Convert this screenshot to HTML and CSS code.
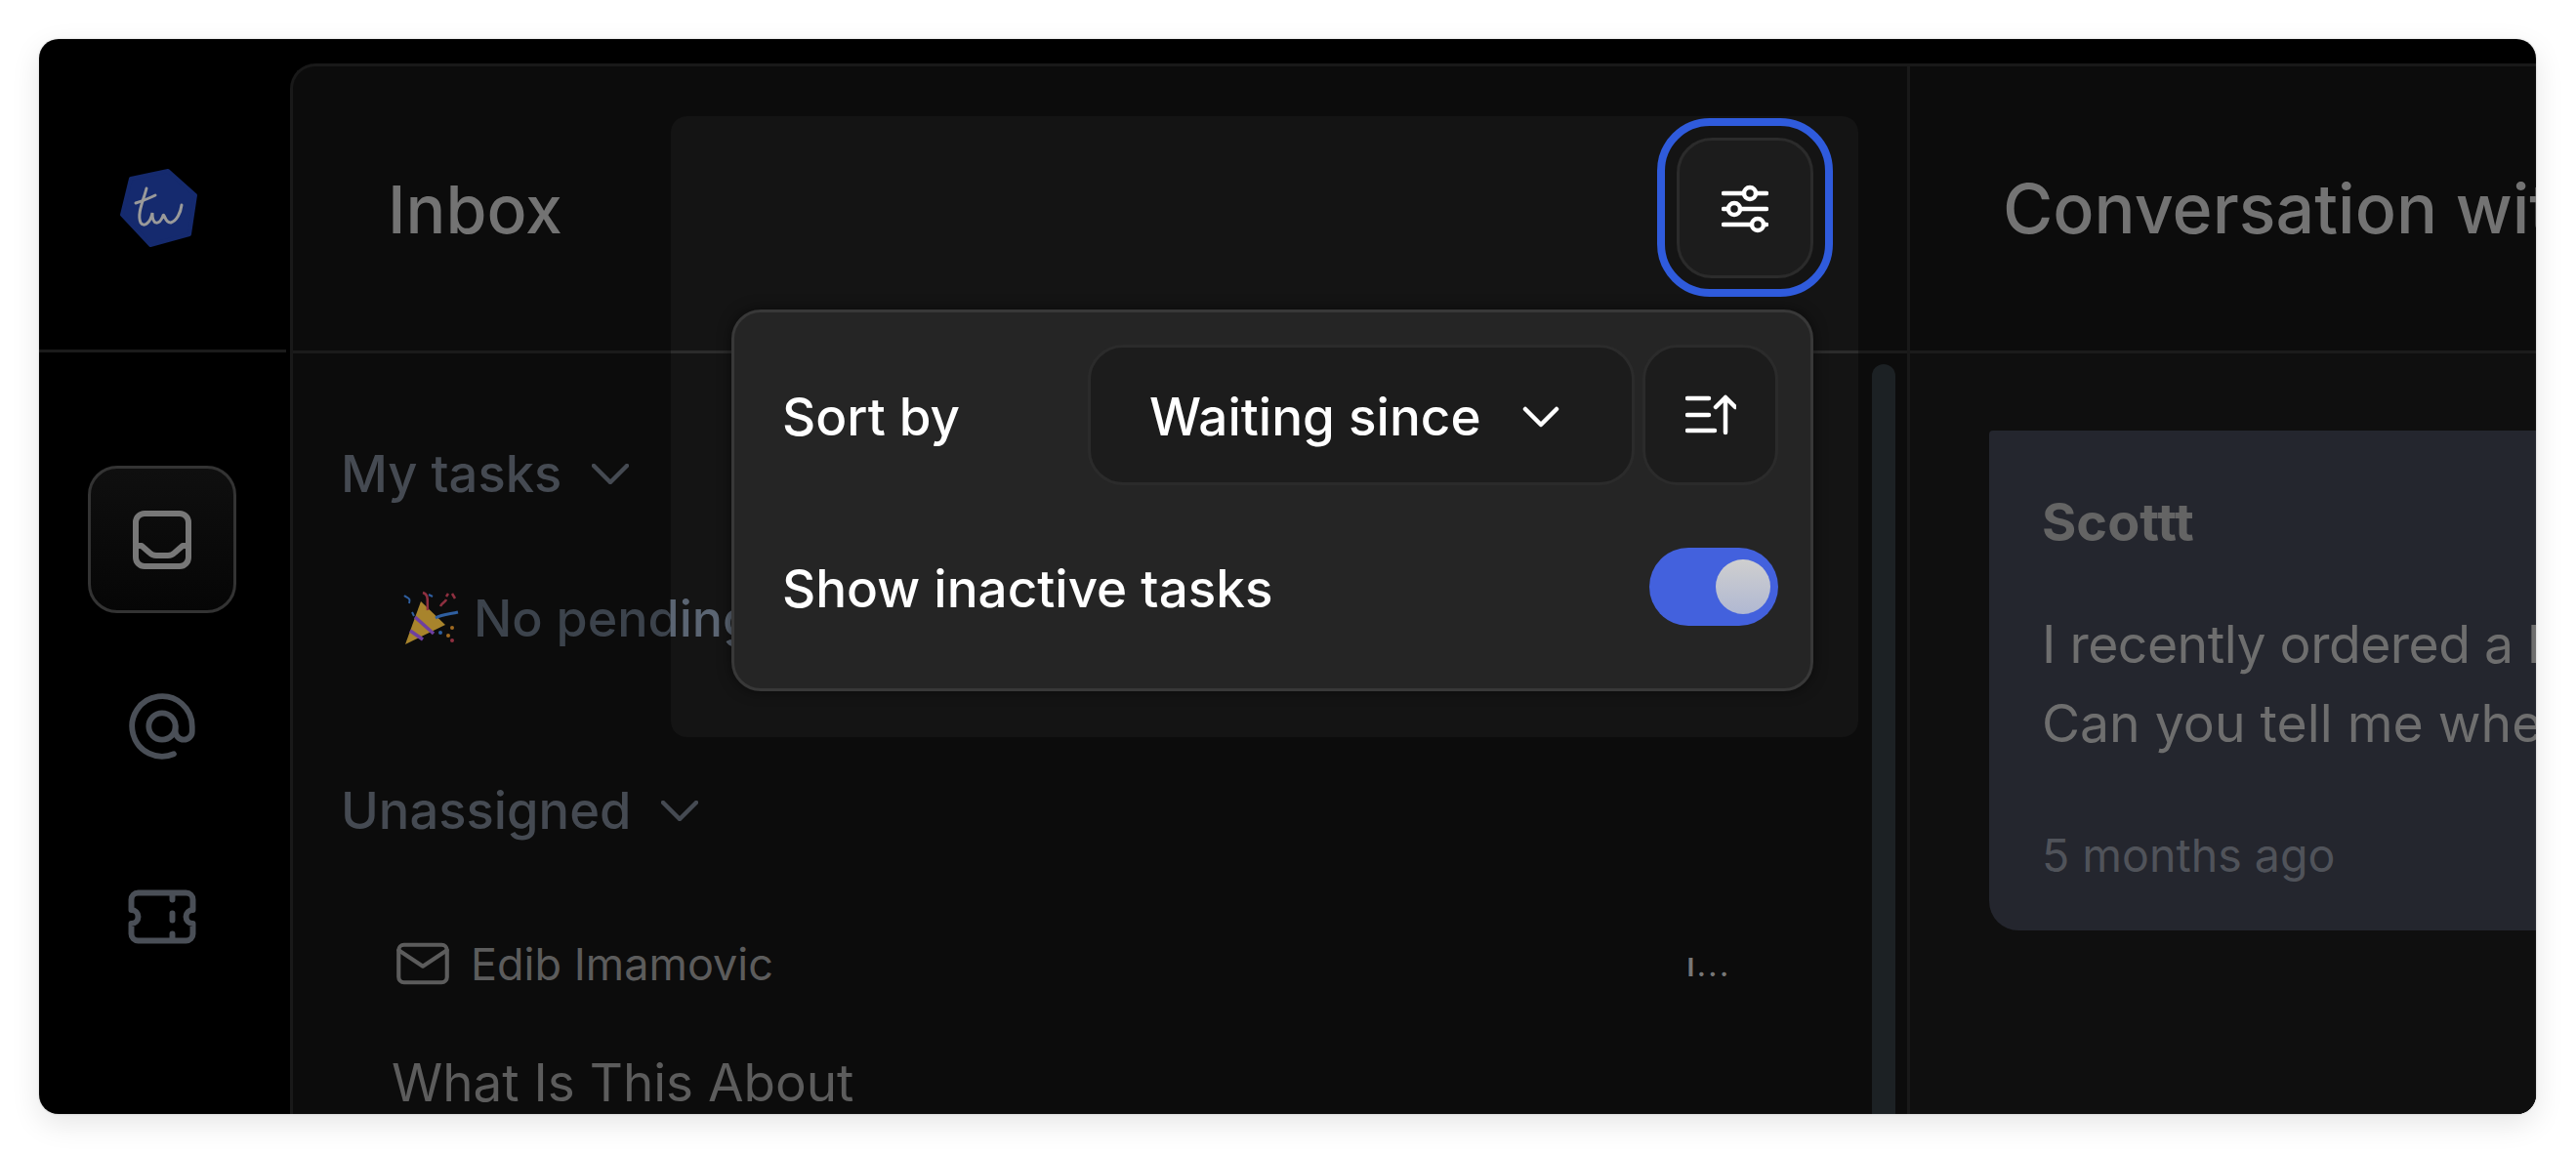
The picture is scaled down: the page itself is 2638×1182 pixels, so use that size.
FILE: index.html
```html
<!DOCTYPE html>
<html lang="en">
<head>
  <meta charset="UTF-8" />
  <meta name="viewport" content="width=device-width, initial-scale=1.0" />
  <title>Inbox</title>
  <link rel="stylesheet" href="styles.css">
</head>
<body>
  <div class="frame">
    <aside class="sidebar">
      <div class="brand">
        <svg class="logo" viewBox="0 0 80 80" fill="none">
          <path d="M49 2 L77 27 L71 67 L31 78 L2 47 L11 10 Z" fill="#152a6e" stroke="#152a6e" stroke-width="4" stroke-linejoin="round"/>
          <path d="M27 20 C24 32 17 46 21 55 C24 60 31 56 33 45 C33 58 40 58 44 48 C45 44 46 56 52 55 C58 53 62 45 63 37" stroke="#9a9a9a" stroke-width="3" stroke-linecap="round"/>
          <path d="M16 35 C22 33 30 30 36 27" stroke="#9a9a9a" stroke-width="3" stroke-linecap="round"/>
        </svg>
      </div>
      <nav class="side-nav">
        <a class="nav-item active">
          <svg width="60" height="60" viewBox="0 0 60 60" fill="none" stroke="#777" stroke-width="6" stroke-linejoin="round" stroke-linecap="round">
            <rect x="3" y="3" width="54" height="54" rx="9"/>
            <path d="M3 36 H9 L17 43 C19 45 21 46 24 46 H36 C39 46 41 45 43 43 L51 36 H57"/>
          </svg>
        </a>
        <a class="nav-item">
          <svg width="82" height="82" viewBox="0 0 24 24" fill="none" stroke="#4a4f57" stroke-width="1.7" stroke-linecap="round" stroke-linejoin="round">
            <circle cx="12" cy="12" r="4"/>
            <path d="M16 12v1.5a2.5 2.5 0 0 0 5 0v-1.5a9 9 0 1 0 -5.5 8.28"/>
          </svg>
        </a>
        <a class="nav-item">
          <svg width="84" height="84" viewBox="0 0 24 24" fill="none" stroke="#4a4f57" stroke-width="1.7" stroke-linecap="round" stroke-linejoin="round">
            <path d="M15 5v2M15 11v2M15 17v2M5 5h14a2 2 0 0 1 2 2v3a2 2 0 0 0 0 4v3a2 2 0 0 1 -2 2h-14a2 2 0 0 1 -2 -2v-3a2 2 0 0 0 0 -4v-3a2 2 0 0 1 2 -2"/>
          </svg>
        </a>
      </nav>
    </aside>

    <main class="panel">
      <section class="inbox">
        <header class="col-head"><h1>Inbox</h1></header>
        <div class="list">
          <div class="group-title">
            <span>My tasks</span>
            <svg class="chevron" viewBox="0 0 38 21" fill="none"><path d="M2 2 L19 19 L36 2"/></svg>
          </div>
          <div class="empty">
            <svg class="popper" viewBox="0 0 57 57">
              <path d="M2 55 L18 11 L43 35 Z" fill="#a8842c"/>
              <path d="M12 27 L31 44 M7 41 L20 50" stroke="#6e3fa0" stroke-width="3.5" fill="none"/>
              <path d="M20 2 C27 4 24 12 25 20" stroke="#8f3040" stroke-width="2.5" fill="none"/>
              <path d="M33 28 C40 24 48 24 56 22" stroke="#2f5fa0" stroke-width="3" fill="none"/>
              <path d="M1 5 C4 8 8 7 6 13 M26 4 L30 6 M9 22 L11 26" stroke="#2f5fa0" stroke-width="2" fill="none"/>
              <path d="M38 16 C40 12 43 12 44 9 M50 3 L53 8 M44 6 L46 3" stroke="#8f3040" stroke-width="2.5" fill="none"/>
              <circle cx="50" cy="38" r="2" fill="#a06a20"/><circle cx="46" cy="46" r="2" fill="#a06a20"/><circle cx="50" cy="51" r="2" fill="#8f3040"/><circle cx="38" cy="43" r="2" fill="#2f5fa0"/>
            </svg>
            <span>No pending tasks</span>
          </div>
          <div class="group-title second">
            <span>Unassigned</span>
            <svg class="chevron" viewBox="0 0 38 21" fill="none"><path d="M2 2 L19 19 L36 2"/></svg>
          </div>
          <div class="task-meta">
            <div class="task-from">
              <svg width="66" height="66" viewBox="0 0 24 24" fill="none" stroke="#5c5c5c" stroke-width="1.5" stroke-linecap="round" stroke-linejoin="round">
                <rect x="3" y="5" width="18" height="14" rx="2"/>
                <path d="M3 7l9 6l9 -6"/>
              </svg>
              <span>Edib Imamovic</span>
            </div>
            <span class="task-time">I...</span>
          </div>
          <div class="task-title">What Is This About</div>
        </div>
        <div class="scrollbar"></div>
      </section>

      <section class="conversation">
        <header class="col-head"><h1>Conversation with Scottt</h1></header>
        <div class="thread">
          <div class="bubble">
            <div class="bubble-name">Scottt</div>
            <p>I recently ordered a laptop from your store.</p>
            <p>Can you tell me where my order is right now?</p>
            <div class="bubble-time">5 months ago</div>
          </div>
        </div>
      </section>
    </main>

    <div class="overlay">
      <div class="focus-ring">
        <button class="icon-btn filter-btn">
          <svg width="48" height="52" viewBox="0 0 48 52" fill="none" stroke="#fff" stroke-width="4.5" stroke-linecap="round">
            <path d="M2 11 H46 M2 27 H46 M2 43 H46"/>
            <circle cx="29" cy="11" r="6" fill="#1c1c1c"/>
            <circle cx="13" cy="27" r="6" fill="#1c1c1c"/>
            <circle cx="37" cy="43" r="6" fill="#1c1c1c"/>
          </svg>
        </button>
      </div>
      <div class="popover">
        <div class="pop-row">
          <span class="pop-label">Sort by</span>
          <div class="pop-controls">
            <button class="select">
              <span>Waiting since</span>
              <svg width="38" height="22" viewBox="0 0 38 22" fill="none" stroke="#fff" stroke-width="4.5" stroke-linecap="round" stroke-linejoin="round"><path d="M3 3 L19 19 L35 3"/></svg>
            </button>
            <button class="icon-btn sort-btn">
              <svg width="52" height="42" viewBox="0 0 52 42" fill="none" stroke="#fff" stroke-width="4.5" stroke-linecap="round" stroke-linejoin="round">
                <path d="M2 4 H24 M2 21 H24 M2 37 H30 M41 39 V3 M31 13 L41 3 L51 13"/>
              </svg>
            </button>
          </div>
        </div>
        <div class="pop-row toggle-row">
          <span class="pop-label">Show inactive tasks</span>
          <div class="toggle"><span class="knob"></span></div>
        </div>
      </div>
    </div>
  </div>
</body>
</html>
```

FILE: styles.css
```css
* { box-sizing: border-box; }

html, body {
  margin: 0;
  height: 100%;
}
body {
  background: #fff;
  padding: 40px 41px 41px 40px;
  font-family: 'Inter', 'Liberation Sans', sans-serif;
  overflow: hidden;
}
h1, p { margin: 0; font-weight: 400; }

.frame {
  position: relative;
  display: flex;
  height: 100%;
  background: #000;
  border-radius: 20px;
  overflow: hidden;
  box-shadow: 0 10px 30px rgba(0,0,0,0.10), 0 0 2px rgba(0,0,0,0.25);
}

/* left rail */
.sidebar {
  width: 257px;
  flex-shrink: 0;
}
.brand {
  height: 321px;
  margin-right: 4px;
  display: flex;
  align-items: flex-start;
  padding: 133px 0 0 83px;
  border-bottom: 3px solid #1b1b1b;
}
.logo { width: 80px; height: 80px; }
.side-nav {
  display: flex;
  flex-direction: column;
  align-items: center;
  padding: 116px 6px 0 0;
}
.nav-item {
  width: 152px;
  height: 151px;
  display: flex;
  align-items: center;
  justify-content: center;
}
.nav-item + .nav-item { margin-top: 40px; }
.nav-item + .nav-item + .nav-item { margin-top: 44px; }
.nav-item.active {
  border: 3px solid #333;
  border-radius: 30px;
  background: linear-gradient(#0f0f0f, #060606);
}

/* main panel */
.panel {
  flex: 1;
  min-width: 0;
  margin-top: 25px;
  display: flex;
  background: #0c0c0c;
  border: 3px solid #191919;
  border-right: none;
  border-bottom: none;
  border-top-left-radius: 26px;
}
.col-head {
  height: 294px;
  display: flex;
  align-items: center;
  border-bottom: 3px solid #1b1b1b;
}
.col-head h1 {
  font-size: 68px;
  font-weight: 500;
  color: #737373;
  white-space: nowrap;
}

.inbox {
  position: relative;
  width: 1656px;
  flex-shrink: 0;
  border-right: 3px solid #191919;
}
.inbox .col-head { padding-left: 97px; }
.list { padding: 93px 0 0 49px; }
.group-title {
  display: flex;
  align-items: center;
  gap: 31px;
  height: 60px;
  font-size: 52.5px;
  font-weight: 500;
  color: #454a52;
}
.group-title.second { margin-top: 137px; }
.chevron {
  width: 38px;
  height: 21px;
  stroke: #454a52;
  stroke-width: 4.5;
  stroke-linecap: round;
  stroke-linejoin: round;
}
.empty {
  display: flex;
  align-items: center;
  gap: 15px;
  height: 60px;
  margin: 88px 0 0 64px;
  font-size: 52px;
  font-weight: 500;
  color: #3c434c;
  white-space: nowrap;
}
.popper { width: 57px; height: 57px; flex-shrink: 0; }
.task-meta {
  display: flex;
  align-items: center;
  justify-content: space-between;
  height: 60px;
  margin: 97px 180px 0 51px;
}
.task-from {
  display: flex;
  align-items: center;
  gap: 16px;
  font-size: 45px;
  color: #5c5c5c;
}
.task-time {
  padding-top: 6px;
  font-size: 26px;
  font-weight: 700;
  color: #777;
  letter-spacing: 3px;
}
.task-title {
  height: 60px;
  margin: 60px 0 0 52px;
  font-size: 53px;
  color: #5c5c5c;
  white-space: nowrap;
}
.scrollbar {
  position: absolute;
  right: 12px;
  top: 305px;
  bottom: -200px;
  width: 24px;
  border-radius: 12px;
  background: #1c2124;
}

.conversation {
  flex: 1;
  min-width: 0;
  overflow: hidden;
}
.conversation .col-head { padding-left: 95px; }
.conversation .col-head h1 { font-size: 70px; }
.thread {
  background: #0f0f0f;
  height: 100%;
  padding: 79px 0 0 81px;
}
.bubble {
  width: 1100px;
  height: 512px;
  padding: 64px 54px 0;
  background: #24262e;
  border-radius: 4px 0 0 30px;
  white-space: nowrap;
}
.bubble-name {
  font-size: 54px;
  font-weight: 700;
  color: #646464;
  height: 60px;
  line-height: 60px;
  margin-bottom: 54px;
}
.bubble p {
  font-size: 53.5px;
  line-height: 81px;
  color: #6e6e6e;
}
.bubble p:first-of-type { letter-spacing: -0.5px; }
.bubble-time {
  margin-top: 67px;
  font-size: 46.5px;
  color: #50535a;
}

/* filter popover over the list */
.overlay {
  position: absolute;
  left: 647px;
  top: 79px;
  width: 1216px;
  height: 636px;
  padding-top: 2px;
  display: flex;
  flex-direction: column;
  align-items: flex-end;
  background: rgba(255,255,255,0.012);
  backdrop-filter: brightness(1.5);
  border-radius: 16px;
}
.focus-ring {
  width: 180px;
  height: 183px;
  margin-right: 26px;
  padding: 12px;
  display: flex;
  align-items: center;
  justify-content: center;
  border: 8px solid #2f5bdc;
  border-radius: 54px;
}
.icon-btn {
  display: flex;
  align-items: center;
  justify-content: center;
  padding: 0;
  background: #1c1c1c;
  border: 3px solid #2b2b2b;
  border-radius: 36px;
}
.filter-btn { width: 140px; height: 144px; }
.popover {
  width: 1108px;
  height: 391px;
  margin: 13px 46px 0 0;
  padding: 33px 33px 0 49px;
  background: #252525;
  border: 3px solid #383838;
  border-radius: 30px;
  box-shadow: 0 0 14px rgba(0,0,0,0.55);
}
.pop-row {
  display: flex;
  align-items: center;
  justify-content: space-between;
  height: 144px;
}
.toggle-row {
  height: 80px;
  margin-top: 64px;
}
.pop-label {
  padding-top: 3px;
  font-size: 53px;
  font-weight: 500;
  color: #fff;
}
.pop-controls {
  display: flex;
  gap: 8px;
}
.select {
  width: 560px;
  height: 144px;
  padding: 3px 74px 0 60px;
  display: flex;
  align-items: center;
  justify-content: space-between;
  background: #1c1c1c;
  border: 3px solid #2b2b2b;
  border-radius: 36px;
  font-family: inherit;
  font-size: 53px;
  font-weight: 500;
  color: #fff;
}
.sort-btn { width: 139px; height: 144px; }
.toggle {
  width: 132px;
  height: 80px;
  padding: 12px 8px;
  display: flex;
  justify-content: flex-end;
  background: #4361dd;
  border-radius: 40px;
}
.knob {
  width: 56px;
  height: 56px;
  border-radius: 50%;
  background: linear-gradient(#cfcfcf, #b0b8d2);
}
```
